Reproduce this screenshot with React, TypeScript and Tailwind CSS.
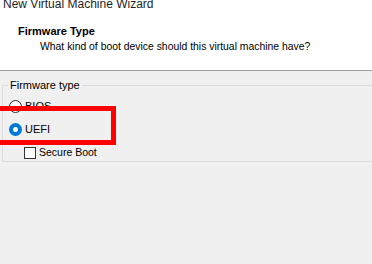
const font = { fontFamily: '"Liberation Sans", Arial, sans-serif' };

const RadioOn = () => (
  <svg width="13" height="13" viewBox="0 0 13 13" className="shrink-0">
    <circle cx="6.5" cy="6.5" r="6.5" fill="#0078d7" />
    <circle cx="6.5" cy="6.5" r="2.5" fill="#ffffff" />
  </svg>
);

const RadioOff = () => (
  <svg width="13" height="13" viewBox="0 0 13 13" className="shrink-0">
    <circle cx="6.5" cy="6.5" r="6" fill="#ffffff" stroke="#333333" strokeWidth="1" />
  </svg>
);

export default function App() {
  return (
    <div
      className="relative flex h-[264px] w-[372px] flex-col overflow-hidden bg-[#f0f0f0] text-[11px] text-black"
      style={font}
    >
      {/* header */}
      <div className="flex h-[71px] shrink-0 flex-col border-b border-[#a0a0a0] bg-white">
        <p className="-mt-[4px] ml-[3px] text-[12px] leading-[16px] text-[#1e1e1e]">New Virtual Machine Wizard</p>
        <p className="ml-[18px] mt-[12px] font-bold leading-[14px]">Firmware Type</p>
        <p className="ml-[40px] mt-[2px] text-[10.4px] leading-[14px]">
          What kind of boot device should this virtual machine have?
        </p>
      </div>

      {/* body */}
      <fieldset className="ml-[2px] mr-[-10px] mt-[7px] h-[84px] border border-[#dcdcdc]">
        <legend className="ml-[5px] px-[2px] leading-[15px]">Firmware type</legend>
        <div className="flex flex-col gap-[10px] pl-[6px] pt-[7px]">
          <div className="flex items-center gap-[3px] leading-[13px]">
            <RadioOff />
            <span>BIOS</span>
          </div>
          <div className="flex items-center gap-[3px] leading-[13px]">
            <RadioOn />
            <span>UEFI</span>
          </div>
          <div className="ml-[15px] flex items-center gap-[3px] text-[10.5px] leading-[13px]">
            <span className="h-[12px] w-[12px] shrink-0 border border-[#333333] bg-white" />
            <span>Secure Boot</span>
          </div>
        </div>
      </fieldset>

      {/* annotation */}
      <div className="absolute left-[-6px] top-[106px] h-[39px] w-[122px] border-[5px] border-[#ff0000]" />
    </div>
  );
}
